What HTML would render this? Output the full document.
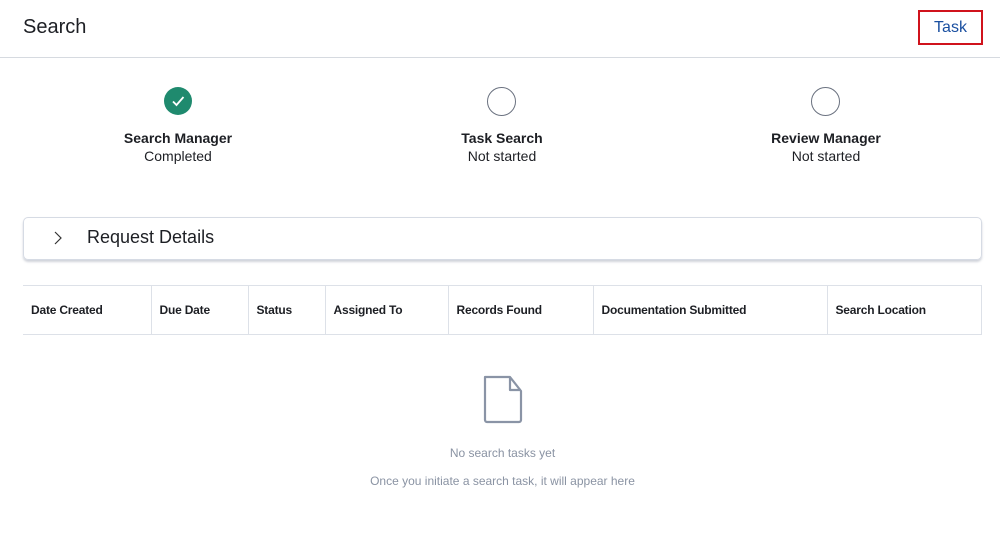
<!DOCTYPE html>
<html><head><style>
body{margin:0;width:1000px;height:541px;background:#fff;font-family:"Liberation Sans",sans-serif;color:#1d1f24;position:relative;overflow:hidden}
.a{position:absolute}
.c{position:absolute;text-align:center;width:200px;font-size:14px;line-height:18px}
table{table-layout:fixed}
th{font-size:12px;font-weight:bold;text-align:left;padding:0 0 0 8px;border-right:1px solid #dde1e8;height:48px;letter-spacing:-0.2px;white-space:nowrap;overflow:hidden}
</style></head><body>
<div class="a" style="left:23px;top:16px;font-size:20px">Search</div>
<div class="a" style="left:918px;top:10px;width:61px;height:31px;border:2px solid #d0131c;color:#1a4fa0;font-size:16px;text-align:center;line-height:31px">Task</div>
<div class="a" style="left:0;top:57px;width:1000px;height:1px;background:#d6dae0"></div>

<div class="a" style="left:164px;top:87px;width:28px;height:28px;border-radius:50%;background:#1f8a6e"></div>
<svg class="a" style="left:164px;top:87px" width="28" height="28"><path d="M9 14.5l3.5 3.5 7-8" fill="none" stroke="#fff" stroke-width="1.8"/></svg>
<div class="a" style="left:487px;top:87px;width:27px;height:27px;border-radius:50%;border:1px solid #6b7280"></div>
<div class="a" style="left:811px;top:87px;width:27px;height:27px;border-radius:50%;border:1px solid #6b7280"></div>
<div class="c" style="left:78px;top:129px"><b>Search Manager</b><br>Completed</div>
<div class="c" style="left:402px;top:129px"><b>Task Search</b><br>Not started</div>
<div class="c" style="left:726px;top:129px"><b>Review Manager</b><br>Not started</div>

<div class="a" style="left:23px;top:217px;width:957px;height:41px;border:1px solid #d6dbe4;border-radius:5px;box-shadow:0 2px 2px rgba(120,130,150,.35)"></div>
<svg class="a" style="left:52px;top:230px" width="12" height="16"><path d="M3 2l6 6-6 6" fill="none" stroke="#333" stroke-width="1.2"/></svg>
<div class="a" style="left:87px;top:227px;font-size:18px">Request Details</div>

<table class="a" style="left:23px;top:285px;width:959px;border-collapse:collapse;border-top:1px solid #dde1e8;border-bottom:1px solid #dde1e8">
<colgroup><col style="width:128px"><col style="width:97px"><col style="width:77px"><col style="width:123px"><col style="width:145px"><col style="width:234px"><col></colgroup>
<tr><th>Date Created</th><th>Due Date</th><th>Status</th><th>Assigned To</th><th>Records Found</th><th>Documentation Submitted</th><th>Search Location</th></tr></table>

<svg class="a" style="left:482px;top:375px" width="44" height="50"><path d="M3 2h25l11 14v29a2 2 0 0 1-2 2H5a2 2 0 0 1-2-2z M28 2v13h11" fill="none" stroke="#8a94a6" stroke-width="2.2" stroke-linejoin="round"/></svg>
<div class="a" style="left:0;width:1005px;top:446px;text-align:center;font-size:12px;color:#8a93a3">No search tasks yet</div>
<div class="a" style="left:0;width:1005px;top:474px;text-align:center;font-size:12px;color:#8a93a3">Once you initiate a search task, it will appear here</div>
</body></html>
